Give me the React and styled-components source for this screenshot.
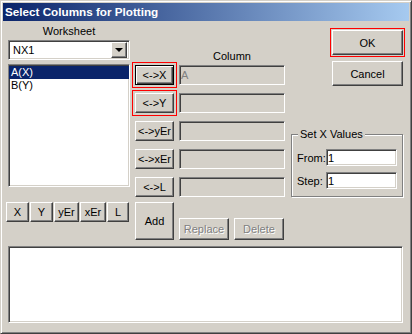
import React from "react";
import styled, { createGlobalStyle, css } from "styled-components";

const FACE = "#d4d0c8";

const GlobalStyle = createGlobalStyle`
  body {
    margin: 0;
    background: ${FACE};
    font-family: "Liberation Sans", Arial, sans-serif;
    font-size: 11px;
  }
`;

// classic 3D edges
const raised = css`
  border: 1px solid;
  border-color: #ffffff #404040 #404040 #ffffff;
  box-shadow: inset -1px -1px 0 #808080, inset 1px 1px 0 ${FACE};
`;

const sunken = css`
  border: 1px solid;
  border-color: #808080 #ffffff #ffffff #808080;
  box-shadow: inset 1px 1px 0 #404040, inset -1px -1px 0 ${FACE};
`;

const Window = styled.div`
  box-sizing: border-box;
  width: 412px;
  height: 334px;
  padding: 2px;
  background: ${FACE};
  border: 1px solid;
  border-color: ${FACE} #404040 #404040 ${FACE};
  box-shadow: inset 1px 1px 0 #ffffff, inset -1px -1px 0 #808080;
  display: flex;
  flex-direction: column;
`;

const TitleBar = styled.div`
  height: 18px;
  line-height: 18px;
  padding-left: 2px;
  background: linear-gradient(to right, #0a246a, #a6caf0);
  color: #ffffff;
  font-weight: bold;
  font-size: 11.7px;
  white-space: nowrap;
`;

const Body = styled.div`
  padding: 4px 6px 0 5px;
  display: flex;
  flex-direction: column;
`;

const Top = styled.div`
  display: grid;
  grid-template-columns: 122px 151px 112px;
  column-gap: 5px;
  align-items: start;
`;

const Column = styled.div`
  display: flex;
  flex-direction: column;
`;

const Caption = styled.div`
  height: 13px;
  line-height: 13px;
  text-align: center;
  color: #000;
  margin: ${(p) => p.$margin || "0"};
  width: ${(p) => (p.$w ? `${p.$w}px` : "auto")};
`;

const Combo = styled.div`
  box-sizing: border-box;
  height: 20px;
  margin-top: 2px;
  background: #ffffff;
  ${sunken}
  padding: 2px;
  display: flex;
  align-items: center;
`;

const ComboText = styled.span`
  flex: 1;
  padding-left: 2px;
  line-height: 16px;
`;

const DropButton = styled.span`
  box-sizing: border-box;
  width: 16px;
  height: 16px;
  background: ${FACE};
  ${raised}
  display: flex;
  align-items: center;
  justify-content: center;
`;

const Arrow = styled.span`
  width: 0;
  height: 0;
  border-left: 4px solid transparent;
  border-right: 4px solid transparent;
  border-top: 4px solid #000;
`;

const ListBox = styled.div`
  box-sizing: border-box;
  height: 123px;
  margin-top: 4px;
  padding: 1px 0;
  background: #ffffff;
  ${sunken}
`;

const ListItem = styled.div`
  height: 13px;
  line-height: 13px;
  padding-left: 2px;
  color: ${(p) => (p.$selected ? "#ffffff" : "#000")};
  background: ${(p) => (p.$selected ? "#0a246a" : "transparent")};
`;

const TypeRow = styled.div`
  display: flex;
  gap: 1px;
  margin: 15px 0 0 -2px;
`;

const Button = styled.button`
  box-sizing: border-box;
  width: ${(p) => p.$w}px;
  height: ${(p) => p.$h || 20}px;
  margin: 0;
  padding: 0;
  font: inherit;
  font-size: 11px;
  color: #000;
  background: ${FACE};
  white-space: nowrap;
  ${raised}
  ${(p) =>
    p.$default &&
    css`
      border: 1px solid #000;
      box-shadow: inset 1px 1px 0 #ffffff, inset -1px -1px 0 #404040,
        inset -2px -2px 0 #808080;
    `}
  ${(p) =>
    p.$marked &&
    css`
      outline: 1px solid #ff0000;
      outline-offset: ${p.$offset ?? 2}px;
    `}
  ${(p) =>
    p.disabled &&
    css`
      color: #808080;
      text-shadow: 1px 1px 0 #ffffff;
    `}
`;

const SwapList = styled.div`
  display: flex;
  flex-direction: column;
  gap: 8px;
  margin-top: 2px;
`;

const SwapRow = styled.div`
  display: flex;
  gap: 5px;
  align-items: center;
`;

const Field = styled.input`
  box-sizing: border-box;
  width: ${(p) => p.$w}px;
  height: ${(p) => p.$h}px;
  margin: 0;
  padding: 0 1px;
  font: inherit;
  font-size: 11px;
  color: ${(p) => (p.disabled ? "#808080" : "#000")};
  background: ${(p) => (p.disabled ? FACE : "#ffffff")};
  ${sunken}
  outline: none;
`;

const ActionRow = styled.div`
  display: flex;
  align-items: flex-end;
  gap: 5px;
  margin-top: 5px;
`;

const RightColumn = styled(Column)`
  align-items: flex-end;
  padding-top: 5px;
  gap: 6px;
`;

const Group = styled.fieldset`
  box-sizing: border-box;
  align-self: stretch;
  min-width: 0;
  margin: 36px 0 0;
  padding: 8px 5px 7px 5px;
  border: 1px solid #808080;
  box-shadow: inset 1px 1px 0 #ffffff, 1px 1px 0 #ffffff;
  display: flex;
  flex-direction: column;
  gap: 6px;
`;

const Legend = styled.legend`
  margin-left: 1px;
  padding: 0 2px;
  line-height: 13px;
  background: ${FACE};
  color: #000;
`;

const GroupRow = styled.div`
  display: flex;
  align-items: center;
`;

const GroupLabel = styled.span`
  width: 29px;
  color: #000;
`;

const Output = styled.div`
  box-sizing: border-box;
  height: 77px;
  margin-top: 6px;
  background: #ffffff;
  ${sunken}
`;

const types = [
  { label: "X", w: 23 },
  { label: "Y", w: 23 },
  { label: "yEr", w: 25 },
  { label: "xEr", w: 26 },
  { label: "L", w: 22 },
];

const swaps = [
  { label: "X", value: "A", def: true, marked: true },
  { label: "Y", value: "", marked: true },
  { label: "yEr", value: "" },
  { label: "xEr", value: "" },
  { label: "L", value: "" },
];

export default function App() {
  return (
    <>
      <GlobalStyle />
      <Window>
        <TitleBar>Select Columns for Plotting</TitleBar>
        <Body>
          <Top>
            <Column>
              <Caption>Worksheet</Caption>
              <Combo>
                <ComboText>NX1</ComboText>
                <DropButton>
                  <Arrow />
                </DropButton>
              </Combo>
              <ListBox>
                <ListItem $selected>A(X)</ListItem>
                <ListItem>B(Y)</ListItem>
              </ListBox>
              <TypeRow>
                {types.map((t) => (
                  <Button key={t.label} $w={t.w}>
                    {t.label}
                  </Button>
                ))}
              </TypeRow>
            </Column>

            <Column>
              <Caption $margin="25px 0 0 44px" $w={106}>
                Column
              </Caption>
              <SwapList>
                {swaps.map((s) => (
                  <SwapRow key={s.label}>
                    <Button $w={39} $default={s.def} $marked={s.marked}>
                      {`<->${s.label}`}
                    </Button>
                    <Field $w={106} $h={20} disabled readOnly value={s.value} />
                  </SwapRow>
                ))}
              </SwapList>
              <ActionRow>
                <Button $w={39} $h={38}>
                  Add
                </Button>
                <Button $w={50} $h={22} disabled>
                  Replace
                </Button>
                <Button $w={50} $h={22} disabled>
                  Delete
                </Button>
              </ActionRow>
            </Column>

            <RightColumn>
              <Button $w={71} $h={25} $marked $offset={1}>
                OK
              </Button>
              <Button $w={71} $h={25}>
                Cancel
              </Button>
              <Group>
                <Legend>Set X Values</Legend>
                <GroupRow>
                  <GroupLabel>From:</GroupLabel>
                  <Field $w={71} $h={17} readOnly value="1" />
                </GroupRow>
                <GroupRow>
                  <GroupLabel>Step:</GroupLabel>
                  <Field $w={71} $h={17} readOnly value="1" />
                </GroupRow>
              </Group>
            </RightColumn>
          </Top>
          <Output />
        </Body>
      </Window>
    </>
  );
}
